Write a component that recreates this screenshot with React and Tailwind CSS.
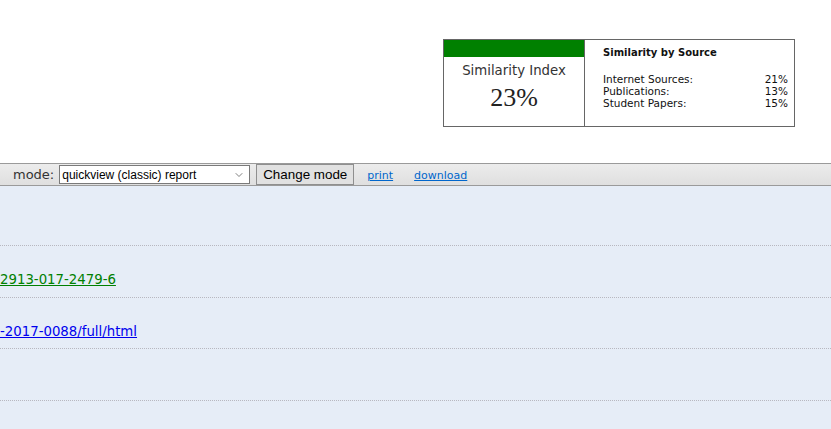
import { ChevronDown } from 'lucide-react'

const sources = [
    { label: 'Internet Sources:', value: '21%' },
    { label: 'Publications:', value: '13%' },
    { label: 'Student Papers:', value: '15%' },
]

const rows = [
    { text: '2913-017-2479-6', color: 'text-[#008000]', h: 'h-[52px]' },
    { text: '-2017-0088/full/html', color: 'text-[#0000ee]', h: 'h-[51px]' },
    { text: '', color: '', h: 'h-[52px]' },
]

export default function App() {
    return (
        <div className="w-[831px] h-[429px] overflow-hidden bg-white font-['DejaVu_Sans',Verdana,sans-serif]">
            {/* Header with similarity summary */}
            <div className="h-[163px] pt-[39px] pl-[443px]">
                <div className="flex w-[352px] h-[88px] border border-[#666]">
                    <div className="w-[141px] flex flex-col border-r border-[#666]">
                        <div className="h-[17px] bg-[#008000]" />
                        <div className="text-center text-[13.3px] text-[#333] mt-[6px] leading-4">Similarity Index</div>
                        <div className="text-center text-[26px] text-[#222] font-['Liberation_Serif',Georgia,serif] leading-7 mt-[5px]">23%</div>
                    </div>
                    <div className="flex-1 pl-[18px] pr-[6px] pt-[5px] text-[#111]">
                        <div className="text-[10px] font-bold leading-4">Similarity by Source</div>
                        <div className="mt-[12px]">
                            {sources.map((s) => (
                                <div key={s.label} className="flex justify-between text-[10.5px] leading-[12px]">
                                    <span>{s.label}</span>
                                    <span>{s.value}</span>
                                </div>
                            ))}
                        </div>
                    </div>
                </div>
            </div>

            {/* Mode toolbar */}
            <div className="h-[23px] border-t border-b border-[#9a9a9a] bg-gradient-to-b from-[#ececec] to-[#dfdfdf] flex items-center text-[#333]">
                <span className="ml-[13px] text-[13px] leading-4">mode:</span>
                <div className="ml-[5px] w-[191px] h-[19px] bg-white border border-[#7a7a7a] flex items-center justify-between pl-[2px] pr-[4px] font-['Liberation_Sans',Arial,sans-serif] text-[12px] text-black">
                    <span>quickview (classic) report</span>
                    <ChevronDown size={12} strokeWidth={1.5} className="text-[#555]" />
                </div>
                <button className="ml-[6px] w-[98px] h-[21px] bg-[#e1e1e1] border border-[#8f8f8f] font-['Liberation_Sans',Arial,sans-serif] text-[13.4px] text-black leading-4">
                    Change mode
                </button>
                <a className="ml-[13px] mt-[3px] text-[11px] text-[#0066cc] underline">print</a>
                <a className="ml-[21px] mt-[3px] text-[11px] text-[#0066cc] underline">download</a>
            </div>

            {/* Report rows */}
            <div className="bg-[#e6edf7] h-full">
                <div className="h-[60px] border-b border-dotted border-[#b8b8c0]" />
                {rows.map((r, i) => (
                    <div key={i} className={`${r.h} border-b border-dotted border-[#b8b8c0] pt-[21px]`}>
                        {r.text && (
                            <a className={`text-[13.3px] leading-4 underline whitespace-nowrap ${r.color}`}>{r.text}</a>
                        )}
                    </div>
                ))}
            </div>
        </div>
    )
}
